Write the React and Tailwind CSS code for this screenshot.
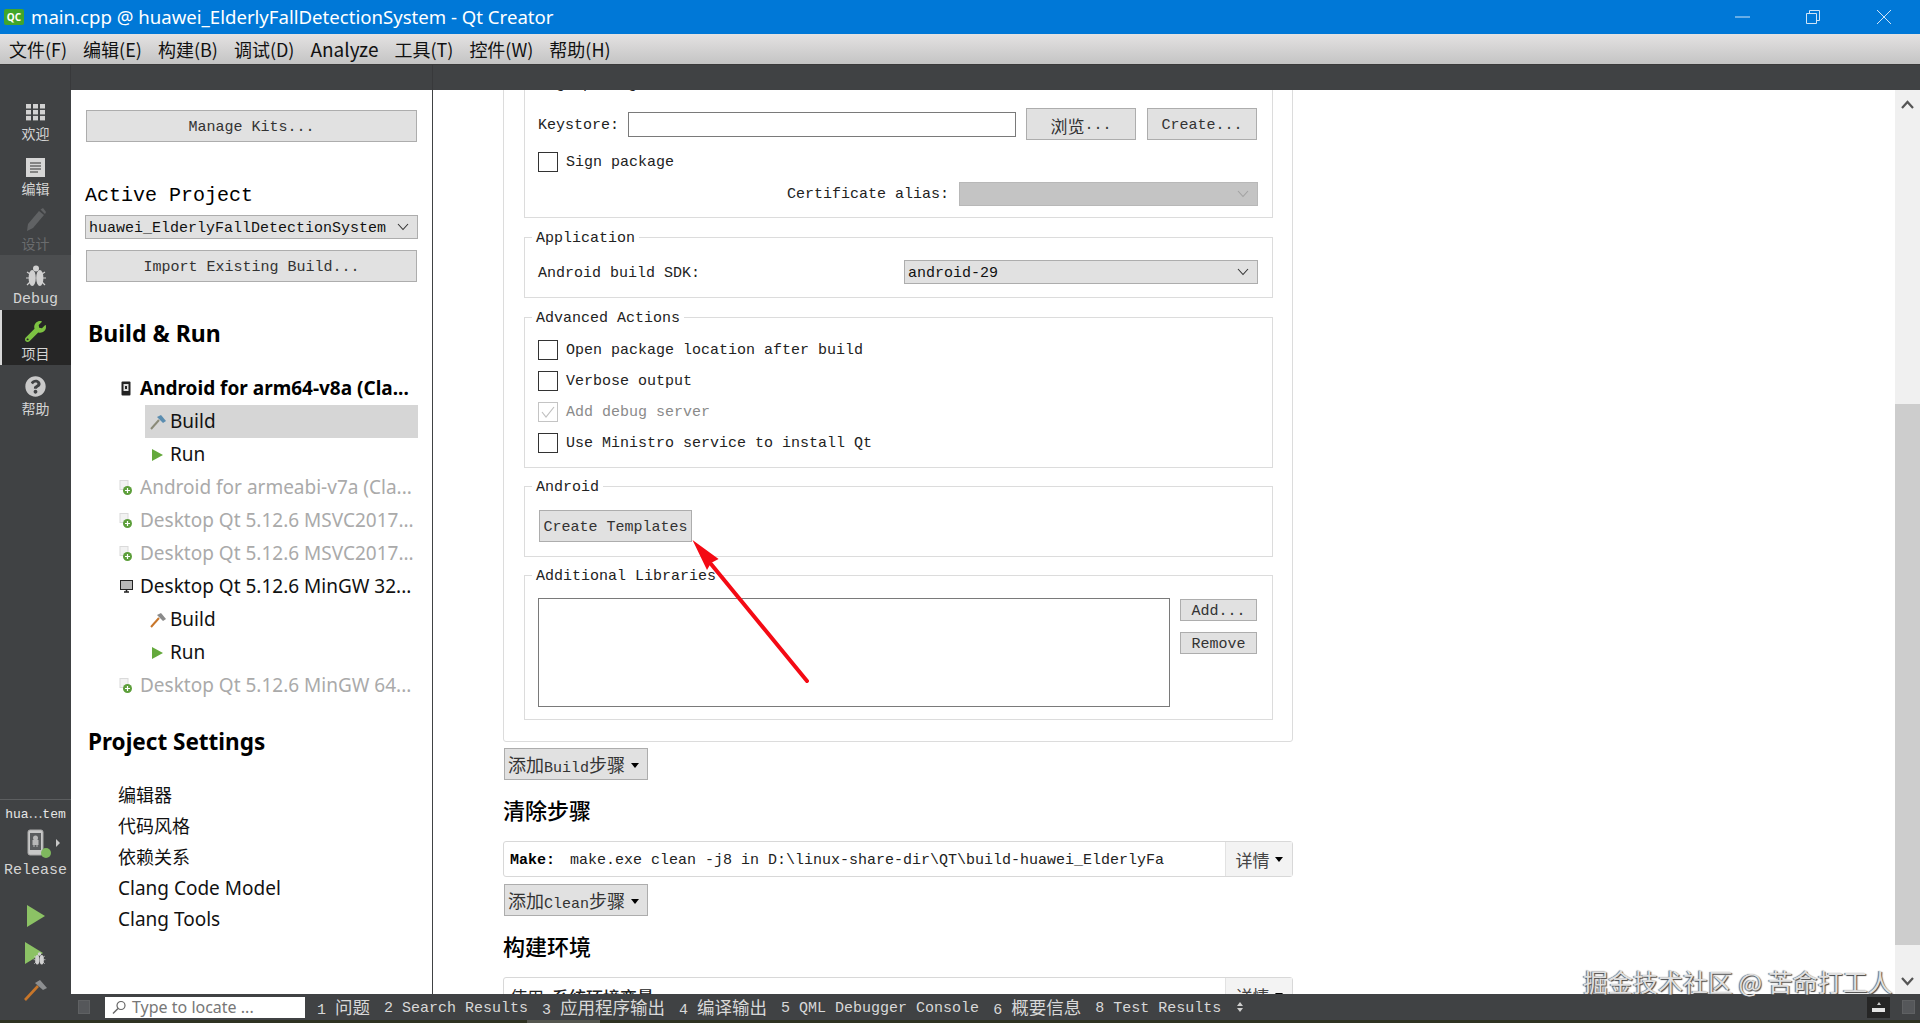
import { FaWrench, FaQuestionCircle } from "react-icons/fa";

const mono = "font-['Liberation_Mono','Noto_Sans_CJK_SC',monospace]";
const ui = "font-['Noto_Sans','Noto_Sans_CJK_SC',sans-serif]";

function Cn({ children, size = "text-[18px]" }) {
    return <span className={`${size} font-['Noto_Sans_CJK_SC',sans-serif]`}>{children}</span>;
}

function Btn({ className = "", children }) {
    return (
        <div className={`flex items-center justify-center bg-[#e1e1e1] border border-[#adadad] pt-[3px] text-[#333] text-[15px] leading-none whitespace-nowrap ${className}`}>
            {children}
        </div>
    );
}

function Chevron({ className = "" }) {
    return (
        <svg width="12" height="8" viewBox="0 0 12 8" className={className}>
            <path d="M1 1 L6 6.5 L11 1" fill="none" stroke="currentColor" strokeWidth="1.1" />
        </svg>
    );
}

function Caret() {
    return <span className="w-0 h-0 border-x-[4px] border-x-transparent border-t-[5px] border-t-black" />;
}

function Check({ label, disabled }) {
    return (
        <div className="flex items-center h-[31px] text-[15px]">
            <div className={`w-[20px] h-[20px] border flex items-center justify-center ${disabled ? "border-[#c4c4c4]" : "border-[#333]"}`}>
                {disabled && (
                    <svg width="14" height="12" viewBox="0 0 14 12">
                        <path d="M1 6 L5 11 L13 1" fill="none" stroke="#c0c0c0" strokeWidth="1.2" />
                    </svg>
                )}
            </div>
            <span className={`ml-[8px] pt-[4px] ${disabled ? "text-[#8a8a8a]" : "text-[#222]"}`}>{label}</span>
        </div>
    );
}

function Group({ title, className = "", children }) {
    return (
        <div className={`w-[749px] border border-[#dcdcdc] pl-[13px] pr-[14px] ${className}`}>
            {title && (
                <div className="w-fit h-[22px] -mt-[12px] -ml-[6px] px-[4px] bg-white text-[15px] text-[#222] leading-[26px]">
                    {title}
                </div>
            )}
            {children}
        </div>
    );
}

function Grid() {
    const cells = [0, 7, 14].flatMap((y) => [0, 7, 14].map((x) => [x, y]));
    return (
        <svg width="19" height="17" viewBox="0 0 19 17" className="mb-[1px]">
            {cells.map(([x, y]) => (
                <rect key={`${x}-${y}`} x={x} y={y * 0.85} width="5" height="4.5" fill="#d2d2d2" />
            ))}
        </svg>
    );
}

function DocIcon() {
    return (
        <svg width="19" height="19" viewBox="0 0 19 19">
            <rect width="19" height="19" fill="#d6d6d6" />
            <path d="M4 5h11M4 8h11M4 11h11M4 14h8" stroke="#333" strokeWidth="1" />
        </svg>
    );
}

function PencilIcon() {
    return (
        <svg width="20" height="24" viewBox="0 0 20 24">
            <path d="M1 23 L2 16 L13 3 L18 7 L7 20 Z" fill="#606264" />
            <path d="M14.5 1.5 L17 0 L20 4 L19 6 Z" fill="#606264" />
        </svg>
    );
}

function BugIcon({ size = 22, color = "#d0d0d0", className = "" }) {
    return (
        <svg width={size} height={size} viewBox="0 0 22 22" className={className}>
            <ellipse cx="7.2" cy="13" rx="3.6" ry="8" fill={color} />
            <ellipse cx="14.8" cy="13" rx="3.6" ry="8" fill={color} />
            <circle cx="11" cy="3.5" r="3" fill={color} />
            <path d="M2 7l3 2M20 7l-3 2M1 13h3M21 13h-3M2 20l3-3M20 20l-3-3" stroke={color} strokeWidth="1.2" />
        </svg>
    );
}

function Hammer({ size = 16, head = "#7f8a94", handle = "#8b8b8b" }) {
    return (
        <svg width={size} height={size} viewBox="0 0 16 16">
            <path d="M1 15 L9 6" stroke={handle} strokeWidth="2" />
            <path d="M7 3 L11 1 L16 7 L13 9 Z" fill={head} />
        </svg>
    );
}

function GreenPlay() {
    return <span className="w-0 h-0 border-y-[6px] border-y-transparent border-l-[11px] border-l-[#64a93c]" />;
}

function AddedKit() {
    return (
        <svg width="14" height="16" viewBox="0 0 14 16">
            <rect x="1" y="0.5" width="8" height="9" fill="#f2f2f2" stroke="#dadada" />
            <circle cx="8.5" cy="10.5" r="4.5" fill="#5c9e3a" />
            <path d="M6 10.5h5M8.5 8v5" stroke="#fff" strokeWidth="1.2" />
        </svg>
    );
}

function PhoneIcon() {
    return (
        <svg width="10" height="15" viewBox="0 0 10 15">
            <rect x="0.5" y="0.5" width="9" height="14" rx="1" fill="#222" />
            <rect x="2.5" y="3" width="5" height="7" fill="#ddd" />
            <rect x="4" y="5" width="2" height="3" fill="#222" />
        </svg>
    );
}

function MonitorIcon() {
    return (
        <svg width="13" height="13" viewBox="0 0 13 13">
            <rect x="0.5" y="0.5" width="12" height="9" fill="#b8b8b8" stroke="#222" />
            <path d="M4 12h5M6.5 10v2" stroke="#222" strokeWidth="1.6" />
        </svg>
    );
}

function NavItem({ icon, label, active, hover, dim }) {
    return (
        <div className={`relative h-[55px] flex flex-col items-center ${active ? "bg-[#262626]" : hover ? "bg-[#4c4e50]" : ""}`}>
            {active && <span className="absolute left-0 top-0 bottom-0 w-[2px] bg-[#d8d8d8]" />}
            <div className="h-[36px] flex items-end justify-center pb-[2px]">{icon}</div>
            <div className={`text-[15px] leading-[18px] ${dim ? "text-[#6a6c6e]" : "text-[#d4d4d4]"}`}>{label}</div>
        </div>
    );
}

function Sidebar() {
    return (
        <div className={`w-[71px] shrink-0 bg-[#404244] flex flex-col ${mono}`}>
            <NavItem icon={<Grid />} label={<Cn size="text-[14px]">欢迎</Cn>} />
            <NavItem icon={<DocIcon />} label={<Cn size="text-[14px]">编辑</Cn>} />
            <NavItem icon={<PencilIcon />} label={<Cn size="text-[14px]">设计</Cn>} dim />
            <NavItem icon={<BugIcon className="mb-[2px]" />} label="Debug" hover />
            <NavItem icon={<FaWrench className="text-[#7dc242] text-[21px]" />} label={<Cn size="text-[14px]">项目</Cn>} active />
            <NavItem icon={<FaQuestionCircle className="text-[#c9c9c9] text-[21px]" />} label={<Cn size="text-[14px]">帮助</Cn>} />
            <div className="flex-1" />
            <div className="h-[221px] border-t border-[#5c5e60] flex flex-col items-center shrink-0">
                <div className="h-[29px] flex items-center text-[13px] text-[#e6e6e6] whitespace-nowrap">hua⋯tem</div>
                <div className="relative h-[27px] w-[71px] flex justify-center">
                    <svg width="18" height="27" viewBox="0 0 18 27">
                        <rect x="1" y="1" width="15" height="25" rx="2" fill="#c8c8c8" stroke="#a8a8a8" />
                        <rect x="3" y="4" width="11" height="17" fill="#5a5c5e" />
                        <path d="M5.5 11h6v5h-1v2h-1v-2h-2v2h-1v-2h-1z" fill="#b8b8b8" />
                        <circle cx="8.5" cy="9" r="2.5" fill="#b8b8b8" />
                    </svg>
                    <span className="absolute left-[41px] top-[19px] w-[10px] h-[10px] rounded-full bg-[#7fb85e]" />
                    <span className="absolute left-[56px] top-[10px] w-0 h-0 border-y-[4px] border-y-transparent border-l-[4px] border-l-[#c8c8c8]" />
                </div>
                <div className="h-[28px] pt-[2px] flex items-center text-[15px] text-[#d4d4d4]">Release</div>
                <svg width="18" height="22" viewBox="0 0 18 22" className="mt-[21px]">
                    <path d="M0 0 L18 11 L0 22 Z" fill="#8cc265" />
                </svg>
                <div className="relative mt-[15px] w-[22px] h-[23px]">
                    <svg width="18" height="22" viewBox="0 0 18 22">
                        <path d="M0 0 L18 11 L0 22 Z" fill="#8cc265" />
                    </svg>
                    <div className="absolute left-[8px] top-[10px]"><BugIcon size={13} /></div>
                </div>
                <svg width="24" height="22" viewBox="0 0 24 22" className="mt-[14px]">
                    <path d="M1 21 L14 7" stroke="#c8762a" strokeWidth="2.6" />
                    <path d="M11 4 L16 1 L23 9 L19 11 Z" fill="#8d8f91" />
                </svg>
            </div>
        </div>
    );
}

function KitRow({ icon, children, className = "" }) {
    return (
        <div className={`h-[33px] flex items-center whitespace-nowrap ${className}`}>
            <div className="w-[20px] ml-[45px] flex justify-center">{icon}</div>
            <span className="ml-[4px]">{children}</span>
        </div>
    );
}

function SubRow({ icon, label, selected }) {
    return (
        <div className={`h-[33px] ml-[74px] w-[273px] flex items-center text-[#111] ${selected ? "bg-[#d6d6d6]" : ""}`}>
            <div className="w-[25px] flex justify-center">{icon}</div>
            <span>{label}</span>
        </div>
    );
}

function ProjectPanel() {
    return (
        <div className="w-[362px] shrink-0 border-r border-[#404244] bg-white flex flex-col overflow-hidden">
            <div className={mono}>
                <Btn className="ml-[15px] mt-[20px] w-[331px] h-[32px]">Manage Kits...</Btn>
                <div className="ml-[14px] mt-[40px] h-[26px] pt-[2px] flex items-center text-[20px] text-black">Active Project</div>
                <div className="ml-[14px] mt-[7px] w-[333px] h-[24px] bg-[#e1e1e1] border border-[#adadad] flex items-center justify-between pl-[3px] pr-[8px] text-[15px] text-[#111]">
                    <span className="pt-[5px]">huawei_ElderlyFallDetectionSystem</span>
                    <Chevron className="text-[#333]" />
                </div>
                <Btn className="ml-[15px] mt-[11px] w-[331px] h-[32px]">Import Existing Build...</Btn>
            </div>
            <div className={ui}>
                <div className="ml-[17px] mt-[35px] h-[32px] flex items-center text-[23px] font-bold text-black">Build &amp; Run</div>
                <div className="mt-[23px] text-[19px] text-[#111]">
                    <KitRow icon={<PhoneIcon />} className="font-bold text-black">Android for arm64-v8a (Cla...</KitRow>
                    <SubRow icon={<Hammer head="#5b8db0" handle="#8a8a78" />} label="Build" selected />
                    <SubRow icon={<GreenPlay />} label="Run" />
                    <KitRow icon={<AddedKit />} className="text-[#aaa]">Android for armeabi-v7a (Cla...</KitRow>
                    <KitRow icon={<AddedKit />} className="text-[#aaa]">Desktop Qt 5.12.6 MSVC2017...</KitRow>
                    <KitRow icon={<AddedKit />} className="text-[#aaa]">Desktop Qt 5.12.6 MSVC2017...</KitRow>
                    <KitRow icon={<MonitorIcon />}>Desktop Qt 5.12.6 MinGW 32...</KitRow>
                    <SubRow icon={<Hammer head="#8a8a8a" handle="#c8762a" />} label="Build" />
                    <SubRow icon={<GreenPlay />} label="Run" />
                    <KitRow icon={<AddedKit />} className="text-[#aaa]">Desktop Qt 5.12.6 MinGW 64...</KitRow>
                </div>
                <div className="ml-[17px] mt-[24px] h-[32px] flex items-center text-[22.5px] font-bold text-black">Project Settings</div>
                <div className="mt-[22px] ml-[47px] text-[19px] text-[#111]">
                    {["编辑器", "代码风格", "依赖关系"].map((item) => (
                        <div key={item} className="h-[31px] flex items-center text-[18px]">{item}</div>
                    ))}
                    {["Clang Code Model", "Clang Tools"].map((item) => (
                        <div key={item} className="h-[31px] flex items-center">{item}</div>
                    ))}
                </div>
            </div>
        </div>
    );
}

function StepRow({ children }) {
    return (
        <div className="mt-[15px] w-[790px] h-[36px] shrink-0 border border-[#d8d8d8] rounded-[3px] flex items-stretch text-[15px] leading-none">
            <div className="flex-1 flex items-center pl-[6px] pt-[3px] text-[#222] whitespace-nowrap">{children}</div>
            <div className="w-[67px] bg-[#f3f3f3] border-l border-[#e2e2e2] flex items-center justify-center gap-[5px] text-[#444]">
                <Cn size="text-[17px]">详情</Cn>
                <Caret />
            </div>
        </div>
    );
}

function AddStep({ label, className = "" }) {
    return (
        <Btn className={`ml-[1px] w-[144px] h-[32px] !justify-start pl-[3px] gap-[6px] ${className}`}>
            <span><Cn>添加</Cn>{label}<Cn>步骤</Cn></span>
            <Caret />
        </Btn>
    );
}

function Heading({ children }) {
    return (
        <div className="mt-[14px] h-[32px] pb-[2px] flex items-center text-[22px] font-medium text-black font-['Noto_Sans_CJK_SC',sans-serif]">
            {children}
        </div>
    );
}

function BuildSettings() {
    return (
        <div className={`flex-1 pl-[70px] overflow-hidden ${mono}`}>
            <div className="-mt-[60px] w-[790px] h-[712px] border border-[#dcdcdc] rounded-[3px] pl-[20px] pt-[30px]">
                <Group className="h-[157px]">
                    <div className="mt-[12px] h-[22px] flex items-center text-[15px] text-[#222]">Sign package</div>
                    <div className="mt-[12px] h-[32px] flex items-center text-[15px] text-[#222]">
                        <span className="w-[90px] pt-[4px]">Keystore:</span>
                        <div className="w-[388px] h-[25px] border border-[#7a7a7a] bg-white" />
                        <Btn className="ml-[10px] w-[110px] h-[32px]"><Cn size="text-[17px]">浏览</Cn>...</Btn>
                        <Btn className="ml-[11px] w-[110px] h-[32px]">Create...</Btn>
                    </div>
                    <div className="mt-[6px]"><Check label="Sign package" /></div>
                    <div className="mt-[5px] h-[24px] flex items-center justify-end text-[15px] text-[#222]">
                        <span className="pt-[3px]">Certificate alias:</span>
                        <div className="ml-[10px] w-[299px] h-[24px] bg-[#c4c4c4] border border-[#b8b8b8] flex items-center justify-end pr-[8px]">
                            <Chevron className="text-[#a2a2a2]" />
                        </div>
                    </div>
                </Group>
                <Group title="Application" className="mt-[19px] h-[61px]">
                    <div className="mt-[12px] h-[24px] flex items-center justify-between text-[15px] text-[#222]">
                        <span className="pt-[5px]">Android build SDK:</span>
                        <div className="w-[354px] h-[24px] bg-[#e1e1e1] border border-[#adadad] flex items-center justify-between pl-[3px] pr-[8px] text-[#111]">
                            <span className="pt-[5px]">android-29</span>
                            <Chevron className="text-[#333]" />
                        </div>
                    </div>
                </Group>
                <Group title="Advanced Actions" className="mt-[19px] h-[151px]">
                    <div className="mt-[6px]">
                        <Check label="Open package location after build" />
                        <Check label="Verbose output" />
                        <Check label="Add debug server" disabled />
                        <Check label="Use Ministro service to install Qt" />
                    </div>
                </Group>
                <Group title="Android" className="mt-[18px] h-[71px]">
                    <Btn className="ml-[1px] mt-[13px] w-[153px] h-[32px]">Create Templates</Btn>
                </Group>
                <Group title="Additional Libraries" className="mt-[18px] h-[145px]">
                    <div className="mt-[12px] flex">
                        <div className="w-[632px] h-[109px] border border-[#7a7a7a]" />
                        <div className="ml-[10px] mt-[1px] flex flex-col gap-[11px]">
                            <Btn className="w-[77px] h-[22px]">Add...</Btn>
                            <Btn className="w-[77px] h-[22px]">Remove</Btn>
                        </div>
                    </div>
                </Group>
            </div>
            <AddStep label="Build" className="mt-[6px]" />
            <Heading>清除步骤</Heading>
            <StepRow>
                <span className="font-bold text-black">Make:</span>
                <span className="ml-[15px]">make.exe clean -j8 in D:\linux-share-dir\QT\build-huawei_ElderlyFa</span>
            </StepRow>
            <AddStep label="Clean" className="mt-[7px]" />
            <Heading>构建环境</Heading>
            <StepRow>
                <Cn size="text-[17px]">使用</Cn>
                <Cn size="ml-[8px] text-[17px] font-medium">系统环境变量</Cn>
            </StepRow>
        </div>
    );
}

function Scrollbar() {
    return (
        <div className="w-[25px] shrink-0 bg-[#f0f0f0] flex flex-col items-center">
            <svg width="13" height="9" viewBox="0 0 13 9" className="mt-[10px]">
                <path d="M1 8 L6.5 2 L12 8" fill="none" stroke="#555" strokeWidth="2.2" />
            </svg>
            <div className="mt-[295px] w-full h-[541px] bg-[#cdcdcd]" />
            <svg width="13" height="9" viewBox="0 0 13 9" className="mt-[32px]">
                <path d="M1 1 L6.5 7 L12 1" fill="none" stroke="#555" strokeWidth="2.2" />
            </svg>
        </div>
    );
}

function BottomBar() {
    const tabs = [
        ["1 ", "问题", ""],
        ["2 Search Results"],
        ["3 ", "应用程序输出", ""],
        ["4 ", "编译输出", ""],
        ["5 QML Debugger Console"],
        ["6 ", "概要信息", ""],
        ["8 Test Results"],
    ];
    return (
        <div className={`h-[26px] shrink-0 bg-[#404244] flex items-center text-[15px] leading-none text-[#d8d8d8] ${mono}`}>
            <div className="ml-[7px] w-[12px] h-[14px] border border-[#5f6163] bg-[#55575a]" />
            <div className={`ml-[15px] w-[200px] h-[21px] bg-white flex items-center pl-[7px] text-[16px] text-[#777] ${ui}`}>
                <svg width="15" height="15" viewBox="0 0 15 15">
                    <circle cx="9" cy="5.5" r="4" fill="none" stroke="#666" strokeWidth="1.2" />
                    <path d="M6 8.5 L1 13.5" stroke="#666" strokeWidth="1.4" />
                </svg>
                <span className="ml-[5px]">Type to locate ...</span>
            </div>
            <div className="ml-[12px] pt-[2px] flex items-center gap-[14px] whitespace-nowrap">
                {tabs.map(([a, b, c]) => (
                    <span key={a}>{a}{b && <Cn size="text-[17.5px]">{b}</Cn>}{c}</span>
                ))}
            </div>
            <div className="ml-[16px] flex flex-col gap-[2px]">
                <span className="w-0 h-0 border-x-[3px] border-x-transparent border-b-[4px] border-b-[#cfcfcf]" />
                <span className="w-0 h-0 border-x-[3px] border-x-transparent border-t-[4px] border-t-[#cfcfcf]" />
            </div>
            <div className="ml-auto w-[23px] h-[21px] bg-[#262626] flex flex-col items-center justify-center gap-[3px]">
                <span className="w-0 h-0 border-x-[2px] border-x-transparent border-b-[3px] border-b-[#ccc]" />
                <span className="w-[13px] h-[4px] bg-[#e4e4e4]" />
            </div>
            <div className="ml-[12px] mr-[5px] w-[13px] h-[14px] border border-[#5f6163] bg-[#55575a]" />
        </div>
    );
}

export default function App() {
    return (
        <div className={`relative w-[1920px] h-[1023px] overflow-hidden flex flex-col bg-white ${ui}`}>
            {/* Title bar */}
            <div className="h-[34px] shrink-0 bg-[#0078d7] flex items-center text-white">
                <div className="ml-[4px] w-[20px] h-[16px] bg-[#41a62a] rounded-[2px] flex items-center justify-center text-[10px] font-bold leading-none">QC</div>
                <span className="ml-[7px] text-[18.6px]">main.cpp @ huawei_ElderlyFallDetectionSystem - Qt Creator</span>
                <div className="ml-auto flex items-center">
                    <svg width="16" height="16" viewBox="0 0 16 16">
                        <path d="M0 8h15" stroke="#cfe4f7" strokeWidth="1" />
                    </svg>
                    <svg width="16" height="16" viewBox="0 0 16 16" className="ml-[54px]">
                        <path d="M1.5 4.5h10v10h-10zM4.5 4.5v-3h10v10h-3" fill="none" stroke="#cfe4f7" strokeWidth="1" />
                    </svg>
                    <svg width="16" height="16" viewBox="0 0 16 16" className="ml-[55px] mr-[28px]">
                        <path d="M1 1L15 15M15 1L1 15" stroke="#cfe4f7" strokeWidth="1" />
                    </svg>
                </div>
            </div>

            {/* Menu bar */}
            <div className="h-[31px] shrink-0 bg-gradient-to-b from-[#e4e2e2] to-[#c4c4c4] border-b border-[#3a3a3a] flex items-center pl-[9px] gap-[16px] text-[18px] text-[#111] font-['Noto_Sans_CJK_SC',sans-serif]">
                {["文件(F)", "编辑(E)", "构建(B)", "调试(D)"].map((item) => (
                    <span key={item}>{item}</span>
                ))}
                <span className="text-[19px]">Analyze</span>
                {["工具(T)", "控件(W)", "帮助(H)"].map((item) => (
                    <span key={item}>{item}</span>
                ))}
            </div>

            {/* Toolbar */}
            <div className="h-[25px] shrink-0 bg-[#404244] flex">
                <div className="w-[71px] border-r border-[#38393b]" />
                <div className="w-[362px] border-r border-[#38393b]" />
            </div>

            <div className="flex-1 min-h-0 flex">
                <Sidebar />
                <div className="flex-1 min-w-0 flex flex-col">
                    <div className="flex-1 min-h-0 flex">
                        <ProjectPanel />
                        <BuildSettings />
                        <Scrollbar />
                    </div>
                    <BottomBar />
                </div>
            </div>

            {/* Taskbar edge */}
            <div className="h-[3px] shrink-0 bg-[#2f3322] flex">
                <div className="ml-[527px] w-[73px] bg-[#55574f]" />
            </div>

            {/* Watermark */}
            <div className="absolute left-[1583px] top-[968px] text-[25px] leading-[27px] whitespace-nowrap text-[#e0e0e0] [text-shadow:1px_1px_1px_#444,-1px_0_1px_#666] font-['Noto_Sans_CJK_SC',sans-serif]">
                掘金技术社区 @ 苦命打工人
            </div>

            {/* Red annotation arrow */}
            <svg width="140" height="160" viewBox="0 0 140 160" className="absolute left-[680px] top-[530px]">
                <path d="M31 34 L127 151" stroke="#f40a14" strokeWidth="4" strokeLinecap="round" />
                <path d="M12.5 10 L38.6 29 L31 33 L27 40 Z" fill="#f40a14" />
            </svg>
        </div>
    );
}
